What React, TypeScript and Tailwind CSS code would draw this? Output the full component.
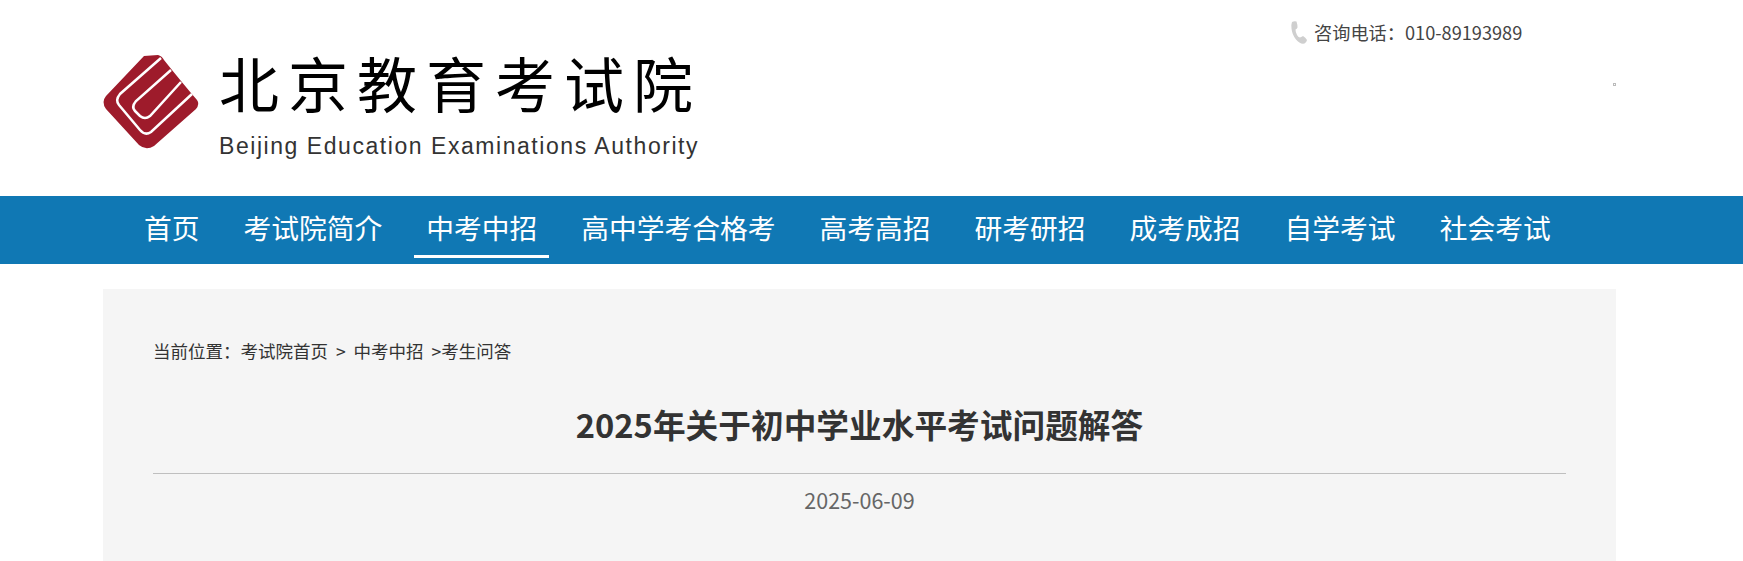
import React from 'react';

const navItems = ['首页', '考试院简介', '中考中招', '高中学考合格考', '高考高招', '研考研招', '成考成招', '自学考试', '社会考试'];

const cjk = "font-['Noto_Sans_CJK_SC','Noto_Sans',sans-serif]";

// red diamond mark, stripes are white strokes over the shape
function LogoMark() {
  return (
    <svg viewBox="11 13 100 100" className="w-[100px] h-[100px] shrink-0">
      <path
        d="M54 16 L68 15 Q72 16 74 20 L82 30 L91 41 L101 53 L107 60 Q110 64 106 69 L64 106 Q56 111 49 105 L16 69 Q11 62 16 56 Z"
        fill="#9e1b2b"
      />
      <path
        d="M71 18 L30 54 Q25 60 29 65 L50 90 Q55 96 61 92 L102 54"
        fill="none"
        stroke="#fff"
        strokeWidth="2.5"
      />
      <path
        d="M81 30 L46 61 Q41 67 45 71 L50 76 Q55 80 60 76 L91 42"
        fill="none"
        stroke="#fff"
        strokeWidth="2.5"
      />
    </svg>
  );
}

function PhoneIcon() {
  return (
    <svg viewBox="0 0 16 24" className="w-4 h-[25px] shrink-0">
      <path
        d="M1 1.5 Q3 .5 5.5 1 Q6.5 4 6.5 7 Q6 8.5 4.5 9 Q4.5 12 6 14.5 Q7 16.5 9 17 Q11 16 12 15.5 Q14.5 17 16 19.5 Q15.5 22 13.5 23 Q9 24 5 19 Q1 14 .5 8 Q0 4 1 1.5 Z"
        fill="#cfcfcf"
      />
    </svg>
  );
}

export default function App() {
  return (
    <div className={`h-[561px] overflow-hidden bg-white text-[#333] ${cjk}`}>
      <header className="w-[1513px] h-[196px] ml-[103px] flex justify-between">
        <div className="flex -ml-[2px] pt-[43px] items-start gap-[18px]">
          <div className="pt-[10px]">
            <LogoMark />
          </div>
          <div className="w-[480px] pt-[3px]">
            <div className="text-[60px] leading-[72px] tracking-[9px] text-black whitespace-nowrap">北京教育考试院</div>
            <div className="font-['Liberation_Sans',sans-serif] text-[23px] leading-[26px] mt-[15px] tracking-[1.55px] text-[#333] whitespace-nowrap">
              Beijing Education Examinations Authority
            </div>
          </div>
        </div>
        <div className="w-[325px] pt-[20px]">
          <div className="flex items-center gap-[7px]">
            <PhoneIcon />
            <span className="mb-[2px] text-[18.2px] leading-5 text-[#444] whitespace-nowrap">咨询电话：010-89193989</span>
          </div>
          <div className="flex justify-end mt-[38px]">
            <div className="w-[3px] h-[3px] border border-[#bbb]"></div>
          </div>
        </div>
      </header>

      <nav className="h-[68px] bg-[#1078b4]">
        <ul className="w-[1513px] ml-[103px] pl-[29px] flex gap-5">
          {navItems.map(item => (
            <li
              key={item}
              className={`px-3 h-[62px] text-[27.75px] leading-[62px] text-white whitespace-nowrap ${item === '中考中招' ? 'border-b-[3px] border-white' : ''}`}
            >
              {item}
            </li>
          ))}
        </ul>
      </nav>

      <main className="w-[1513px] h-[400px] mt-[25px] ml-[103px] bg-[#f5f5f5] px-[50px] pt-[50px]">
        <div className="text-[17.5px] leading-6 [word-spacing:4px] text-[#333] whitespace-nowrap">当前位置：考试院首页 &gt; 中考中招 &gt;考生问答</div>
        <h1 className="mt-[37px] text-center text-[32.7px] leading-[48px] font-bold text-[#333]">2025年关于初中学业水平考试问题解答</h1>
        <div className="mt-[25px] border-t border-[#bfbfbf]"></div>
        <div className="mt-[12px] text-center text-[21.5px] leading-7 text-[#666]">2025-06-09</div>
      </main>
    </div>
  );
}
